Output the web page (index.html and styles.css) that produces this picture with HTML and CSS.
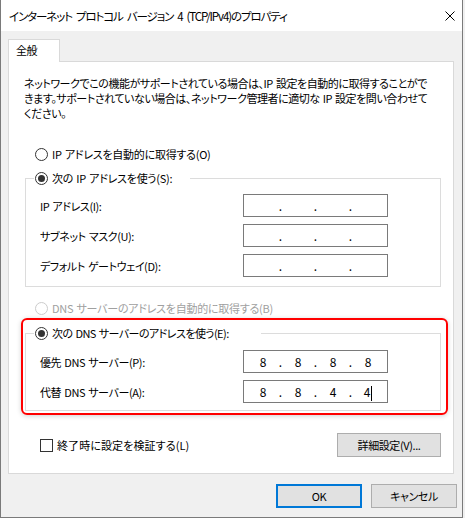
FILE: index.html
```html
<!DOCTYPE html>
<html lang="ja">
<head>
    <meta charset="UTF-8">
    <meta name="viewport" content="width=device-width, initial-scale=1.0">
    <title>インターネット プロトコル バージョン 4 (TCP/IPv4)のプロパティ</title>
    <link rel="stylesheet" href="styles.css">
</head>
<body>
<div class="window">
    <div class="titlebar">
        <span class="title">インターネット プロトコル バージョン 4 (TCP/IPv4)のプロパティ</span>
        <svg class="close" width="10" height="10" viewBox="0 0 10 10">
            <path d="M0.5 0.5L9.5 9.5M9.5 0.5L0.5 9.5" stroke="#000" stroke-width="1" fill="none"/>
        </svg>
    </div>

    <div class="content">
        <div class="tabs"><div class="tab">全般</div></div>

        <div class="panel">
            <p class="intro">ネットワークでこの機能がサポートされている場合は、IP 設定を自動的に取得することがで<br>きます。サポートされていない場合は、ネットワーク管理者に適切な IP 設定を問い合わせて<br>ください。</p>

            <div class="radio-row auto-ip"><span class="radio"></span>IP アドレスを自動的に取得する(O)</div>

            <fieldset class="group ip-group">
                <legend class="legend-ip"><span class="radio checked"></span>次の IP アドレスを使う(S):</legend>
                <div class="fields">
                    <span>IP アドレス(I):</span>
                    <div class="ipbox"><span class="seg"></span><span class="dot">.</span><span class="seg"></span><span class="dot">.</span><span class="seg"></span><span class="dot">.</span><span class="seg"></span></div>
                    <span>サブネット マスク(U):</span>
                    <div class="ipbox"><span class="seg"></span><span class="dot">.</span><span class="seg"></span><span class="dot">.</span><span class="seg"></span><span class="dot">.</span><span class="seg"></span></div>
                    <span>デフォルト ゲートウェイ(D):</span>
                    <div class="ipbox"><span class="seg"></span><span class="dot">.</span><span class="seg"></span><span class="dot">.</span><span class="seg"></span><span class="dot">.</span><span class="seg"></span></div>
                </div>
            </fieldset>

            <div class="radio-row auto-dns disabled"><span class="radio"></span>DNS サーバーのアドレスを自動的に取得する(B)</div>

            <div class="highlight">
                <fieldset class="group dns-group">
                    <legend class="legend-dns"><span class="radio checked"></span>次の DNS サーバーのアドレスを使う(E):</legend>
                    <div class="fields">
                        <span>優先 DNS サーバー(P):</span>
                        <div class="ipbox"><span class="seg">8</span><span class="dot">.</span><span class="seg">8</span><span class="dot">.</span><span class="seg">8</span><span class="dot">.</span><span class="seg">8</span></div>
                        <span>代替 DNS サーバー(A):</span>
                        <div class="ipbox"><span class="seg">8</span><span class="dot">.</span><span class="seg">8</span><span class="dot">.</span><span class="seg">4</span><span class="dot">.</span><span class="seg">4<span class="caret"></span></span></div>
                    </div>
                </fieldset>
            </div>

            <div class="panel-bottom">
                <div class="check-row"><span class="checkbox"></span>終了時に設定を検証する(L)</div>
                <button class="btn btn-detail">詳細設定(V)...</button>
            </div>
        </div>

        <div class="footer">
            <button class="btn btn-ok">OK</button>
            <button class="btn">キャンセル</button>
        </div>
    </div>
</div>
</body>
</html>
```

FILE: styles.css
```css
* {
    box-sizing: border-box;
}
body {
    margin: 0;
    background: #f0f0f0;
    font-family: "Noto Sans CJK JP", sans-serif;
    font-size: 11px;
    font-feature-settings: "palt" 1;
    letter-spacing: -0.4px;
    word-spacing: 1px;
    color: #000;
}
.window {
    width: 463px;
    height: 518px;
    border: 1px solid #7a7a7a;
    border-top: none;
    background: #f0f0f0;
}
.titlebar {
    height: 31px;
    background: #fff;
    display: flex;
    align-items: center;
    justify-content: space-between;
    padding: 0 7px 0 8px;
}
.title {
    font-size: 11.5px;
    letter-spacing: -1.1px;
    word-spacing: 2.5px;
}
.close {
    display: block;
}
.content {
    padding: 8px 0 0 7px;
}
.tabs {
    display: flex;
}
.tab {
    position: relative;
    width: 52px;
    height: 23px;
    margin-bottom: -1px;
    padding-left: 7px;
    line-height: 20px;
    background: #fff;
    border: 1px solid #d9d9d9;
    border-bottom: none;
}
.panel {
    width: 446px;
    background: #fff;
    border: 1px solid #d9d9d9;
    padding-bottom: 16px;
}
.intro {
    margin: 14px 0 0 15px;
    line-height: 15px;
    white-space: nowrap;
    letter-spacing: -0.45px;
}
.radio-row {
    display: flex;
    align-items: center;
    height: 16px;
    margin-left: 26px;
    white-space: nowrap;
    letter-spacing: -0.25px;
}
.auto-ip {
    margin-top: 25px;
}
.auto-dns {
    margin-top: 13px;
}
.disabled {
    color: #a0a0a0;
}
.radio {
    position: relative;
    flex: none;
    width: 13px;
    height: 13px;
    margin-right: 4px;
    border: 1px solid #333;
    border-radius: 50%;
    background: #fff;
}
.disabled .radio {
    border-color: #cccccc;
}
.radio.checked::after {
    content: "";
    position: absolute;
    left: 2px;
    top: 2px;
    width: 7px;
    height: 7px;
    border-radius: 50%;
    background: #333;
}
.group {
    min-width: 0;
    margin: 0;
    padding: 0;
    border: 1px solid #dcdcdc;
}
.ip-group {
    margin: 8px 12px 0 16px;
    padding: 8px 0 9px 0;
}
.dns-group {
    padding: 9px 0 7px 0;
}
legend {
    display: flex;
    align-items: center;
    height: 16px;
    margin-left: 8px;
    padding: 0 0 0 1px;
    white-space: nowrap;
}
.legend-ip {
    width: 156px;
    letter-spacing: -0.25px;
}
.legend-dns {
    width: 227px;
    letter-spacing: -0.55px;
}
.fields {
    display: grid;
    grid-template-columns: 203px 145px;
    row-gap: 7px;
    align-items: center;
    padding-left: 14px;
    white-space: nowrap;
}
.ipbox {
    display: flex;
    height: 23px;
    padding-left: 4px;
    line-height: 21px;
    font-size: 12px;
    letter-spacing: 0;
    word-spacing: 0;
    border: 1px solid #7a7a7a;
    background: #fff;
}
.seg {
    width: 30px;
    text-align: center;
}
.dot {
    width: 5px;
    text-align: center;
}
.caret {
    display: inline-block;
    width: 1px;
    height: 15px;
    margin-left: 1px;
    vertical-align: middle;
    background: #000;
}
.highlight {
    margin: 2px 5px 0 12px;
    padding: 5px 5px 2px 2px;
    border: 2px solid #ff0000;
    border-radius: 6px;
    box-shadow: 0 1px 5px rgba(0, 0, 0, 0.18);
}
.panel-bottom {
    display: flex;
    align-items: center;
    justify-content: space-between;
    margin: 18px 12px 0 31px;
}
.check-row {
    display: flex;
    align-items: center;
    letter-spacing: 0.1px;
}
.checkbox {
    width: 13px;
    height: 13px;
    margin-right: 4px;
    border: 1px solid #333;
    background: #fff;
}
.btn {
    height: 24px;
    width: 86px;
    padding: 0;
    font-family: inherit;
    font-size: 11px;
    font-feature-settings: "palt" 1;
    letter-spacing: -0.4px;
    color: #000;
    background: #e1e1e1;
    border: 1px solid #adadad;
}
.btn-detail {
    width: 104px;
}
.btn-ok {
    border: 2px solid #0078d7;
}
.footer {
    display: flex;
    justify-content: flex-end;
    gap: 9px;
    margin: 10px 5px 0 0;
}
```
